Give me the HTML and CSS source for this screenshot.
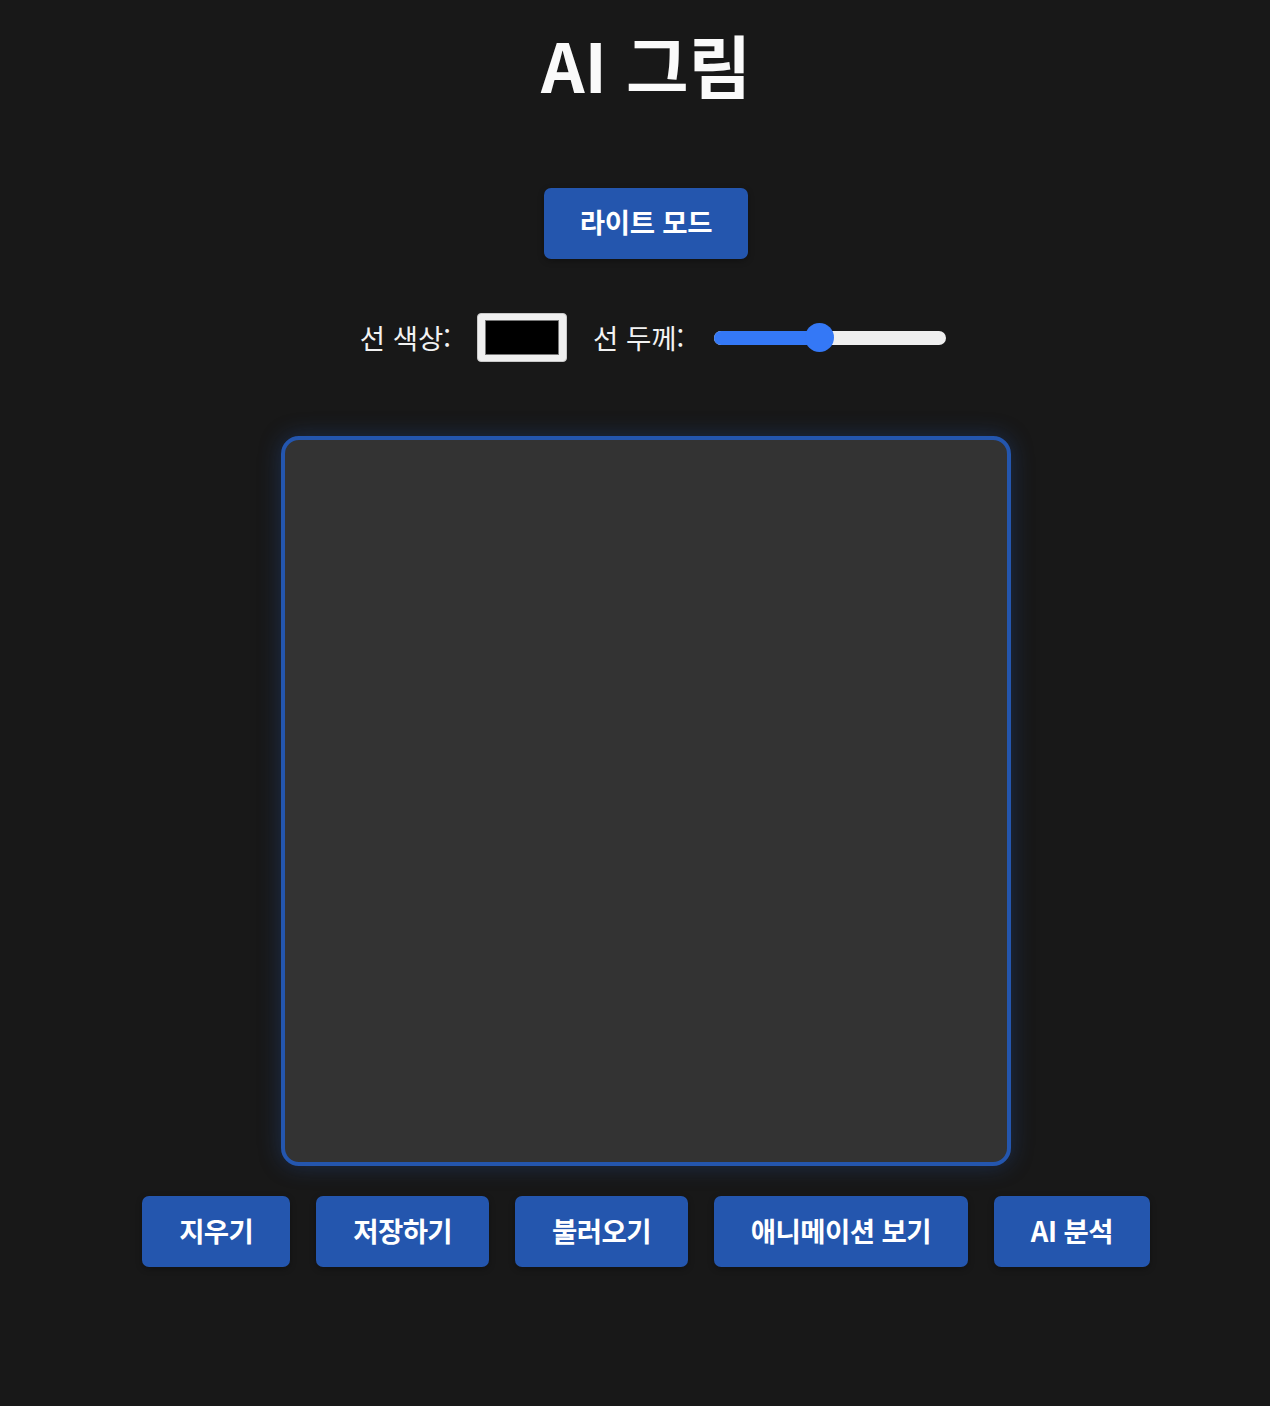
FILE: index.html
```html
<!DOCTYPE html>
<html lang="ko">
<head>
<meta charset="utf-8">
<title>AI 그림</title>
<link rel="stylesheet" href="styles.css">
</head>
<body>
<main class="app">
  <h1 class="title">AI 그림</h1>
  <button class="btn mode-btn" type="button">라이트 모드</button>
  <div class="controls">
    <label class="ctl-label">선 색상:</label>
    <div class="color-input"><span class="swatch"></span></div>
    <label class="ctl-label">선 두께:</label>
    <div class="range">
      <div class="range-fill" style="width:45%"></div>
      <div class="range-thumb" style="left:45%"></div>
    </div>
  </div>
  <div class="canvas"></div>
  <div class="actions">
    <button class="btn" type="button">지우기</button>
    <button class="btn" type="button">저장하기</button>
    <button class="btn" type="button">불러오기</button>
    <button class="btn" type="button">애니메이션 보기</button>
    <button class="btn" type="button">AI 분석</button>
  </div>
</main>
</body>
</html>
```
FILE: styles.css
```css
* { box-sizing: border-box; }
html, body { margin: 0; padding: 0; }
body {
  background: #181818;
  color: #f5f5f5;
  font-family: "Noto Sans CJK KR", "Noto Sans", sans-serif;
  min-height: 1406px;
}
.app {
  display: flex;
  flex-direction: column;
  align-items: center;
  padding-left: 22px;
  padding-top: 20px;
}
.title {
  margin: 0;
  font-size: 68px;
  line-height: 88px;
  font-weight: 700;
  color: #fafafa;
}
.btn {
  font-family: inherit;
  background: #2456ae;
  color: #fff;
  border: none;
  border-radius: 7px;
  font-size: 27.5px;
  font-weight: 700;
  letter-spacing: -0.6px;
  height: 71px;
  padding: 0 37px 4px;
  box-shadow: 0 2px 6px rgba(0,0,0,0.3);
  cursor: pointer;
}
.mode-btn {
  margin-top: 80px;
  width: 204px;
  padding: 0 0 6px;
  letter-spacing: -0.3px;
}
.controls {
  margin-top: 54px;
  margin-left: 14px;
  display: flex;
  align-items: center;
  height: 49px;
}
.ctl-label {
  font-size: 27.5px;
  color: #f2f2f2;
  margin-right: 26px;
  padding-bottom: 2px;
}
.color-input {
  width: 90px;
  height: 49px;
  background: #efefef;
  border: 1px solid #c8c8c8;
  border-radius: 4px;
  padding: 6px 7px;
  margin-right: 26px;
  display: flex;
}
.swatch {
  flex: 1;
  background: #000;
  border: 1px solid #777;
}
.range {
  position: relative;
  width: 232px;
  height: 14px;
  background: #efefef;
  border-radius: 7px;
  margin-left: 4px;
}
.range-fill {
  height: 100%;
  background: #3478f6;
  border-radius: 7px;
}
.range-thumb {
  position: absolute;
  top: 50%;
  width: 29px;
  height: 29px;
  margin-left: -14px;
  margin-top: -14.5px;
  border-radius: 50%;
  background: #3478f6;
}
.canvas {
  margin-top: 74px;
  width: 730px;
  height: 730px;
  background: #333333;
  border: 4px solid #2456ae;
  border-radius: 18px;
  box-shadow: 0 0 22px rgba(36, 86, 174, 0.35);
}
.actions {
  margin-top: 30px;
  display: flex;
  gap: 26px;
}
```
